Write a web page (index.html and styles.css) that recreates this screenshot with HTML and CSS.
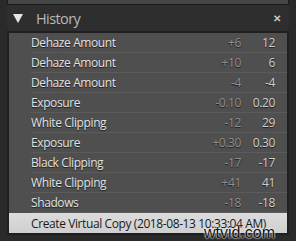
FILE: index.html
```html
<!DOCTYPE html>
<html lang="en">
<head>
    <meta charset="UTF-8">
    <title>History</title>
    <link rel="stylesheet" href="styles.css">
</head>
<body>
    <div class="panel">
        <div class="top-strip"></div>

        <div class="header">
            <svg class="tri" width="10" height="9" viewBox="0 0 10 9"><polygon points="0,0 10,0 5,9" fill="#e6e6e6"/></svg>
            <span class="title">History</span>
            <span class="close">&#10005;</span>
        </div>

        <div class="list">
            <div class="row"><span class="name">Dehaze Amount</span><span class="delta">+6</span><span class="value">12</span></div>
            <div class="row"><span class="name">Dehaze Amount</span><span class="delta">+10</span><span class="value">6</span></div>
            <div class="row"><span class="name">Dehaze Amount</span><span class="delta">-4</span><span class="value">-4</span></div>
            <div class="row"><span class="name">Exposure</span><span class="delta">-0.10</span><span class="value">0.20</span></div>
            <div class="row"><span class="name">White Clipping</span><span class="delta">-12</span><span class="value">29</span></div>
            <div class="row"><span class="name">Exposure</span><span class="delta">+0.30</span><span class="value">0.30</span></div>
            <div class="row"><span class="name">Black Clipping</span><span class="delta">-17</span><span class="value">-17</span></div>
            <div class="row"><span class="name">White Clipping</span><span class="delta">+41</span><span class="value">41</span></div>
            <div class="row"><span class="name">Shadows</span><span class="delta">-18</span><span class="value">-18</span></div>
            <div class="row selected"><span class="name">Create Virtual Copy (2018-08-13 10:33:04 AM)</span></div>
        </div>
    </div>

    <div class="watermark">wtvid.com</div>
</body>
</html>
```

FILE: styles.css
```css
body { margin: 0; width: 296px; height: 241px; background: #2a2a2a; font-family: "Open Sans", sans-serif; overflow: hidden; position: relative; }
.panel { margin-left: 7px; width: 282px; }
.top-strip { height: 4px; background: #464646; border: 1px solid #1c1c1c; border-top: none; }
.header { height: 26px; display: flex; align-items: center; padding: 0 8px 0 6px; background: #2e2e2e; }
.tri { margin-right: 13px; }
.title { flex: 1; color: #b8b8b8; font-size: 14.5px; letter-spacing: -0.6px; }
.close { color: #c8c8c8; font-size: 10px; font-weight: bold; }
.list { background: #4f4f4f; border: 2px solid #1f1f1f; }
.row { height: 20px; display: flex; align-items: center; margin-left: 22px; padding-right: 12px; border-bottom: 1px solid #5b5b5b; box-sizing: border-box; font-size: 12px; letter-spacing: -0.4px; color: #e2e2e2; text-shadow: 0 1px 1px #1e1e1e; }
.name { flex: 1; white-space: nowrap; }
.delta { color: #8f8f8f; text-align: right; width: 60px; }
.value { color: #cfcfcf; text-align: right; width: 34px; }
.row.selected { margin-left: 0; padding-left: 22px; border-bottom: none; background: linear-gradient(#dcdcdc, #cfcfcf); color: #1a1a1a; text-shadow: none; }
.watermark { position: absolute; right: 21px; bottom: 0; font-family: "Liberation Sans", sans-serif; font-size: 16px; line-height: 16px; color: #111; text-shadow: 0 0 2px #fff, 0 0 2px #fff; }
```
